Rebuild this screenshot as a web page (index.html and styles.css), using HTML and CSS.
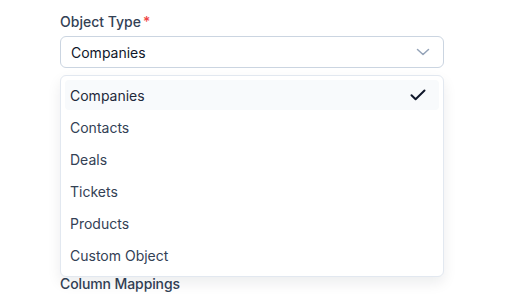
FILE: index.html
```html
<!DOCTYPE html>
<html lang="en">
<head>
    <meta charset="UTF-8">
    <meta name="viewport" content="width=device-width, initial-scale=1.0">
    <title>Object Type</title>
    <link rel="stylesheet" href="styles.css">
</head>
<body>
    <div class="form">
        <div class="field">
            <label class="field-label">Object Type<span class="required">*</span></label>
            <div class="select-wrap">
                <div class="select">
                    <span>Companies</span>
                    <svg class="chevron" width="14" height="8" viewBox="0 0 14 8" fill="none">
                        <path d="M1.5 1.5L7 6.5L12.5 1.5" stroke="#94a3b8" stroke-width="1.5" stroke-linecap="round" stroke-linejoin="round"/>
                    </svg>
                </div>
                <ul class="dropdown">
                    <li class="option selected">
                        <span>Companies</span>
                        <svg width="16" height="12" viewBox="0 0 16 12" fill="none">
                            <path d="M1.5 6.2L5.6 10.2L14.5 1.5" stroke="#0f172a" stroke-width="2" stroke-linecap="round" stroke-linejoin="round"/>
                        </svg>
                    </li>
                    <li class="option">Contacts</li>
                    <li class="option">Deals</li>
                    <li class="option">Tickets</li>
                    <li class="option">Products</li>
                    <li class="option">Custom Object</li>
                </ul>
            </div>
        </div>

        <div class="section">
            <h3 class="section-title">Column Mappings</h3>
        </div>
    </div>
</body>
</html>
```

FILE: styles.css
```css
body {
    margin: 0;
    background: #ffffff;
    font-family: Inter, "Noto Sans", sans-serif;
    font-size: 14px;
    color: #334155;
}

.form {
    width: 384px;
    padding: 12px 0 0 60px;
}

.field-label {
    display: block;
    line-height: 20px;
    font-weight: 500;
    color: #334155;
    margin-bottom: 4px;
}

.required {
    color: #ef4444;
    margin-left: 2px;
}

.select-wrap {
    position: relative;
}

.select {
    height: 32px;
    box-sizing: border-box;
    border: 1px solid #cbd5e1;
    border-radius: 6px;
    padding: 0 13px 0 10px;
    display: flex;
    align-items: center;
    justify-content: space-between;
    color: #0f172a;
}

.dropdown {
    position: absolute;
    top: 39px;
    left: 0;
    right: 0;
    margin: 0;
    padding: 4px 4px 6px;
    list-style: none;
    background: #ffffff;
    border: 1px solid #e2e8f0;
    border-radius: 6px;
    box-shadow: 0 6px 14px rgba(15, 23, 42, 0.08);
    display: flex;
    flex-direction: column;
    gap: 2px;
}

.option {
    height: 30px;
    padding: 0 13px 0 5px;
    border-radius: 4px;
    display: flex;
    align-items: center;
    justify-content: space-between;
    color: #334155;
}

.option.selected {
    background: #f8fafc;
    color: #1e293b;
}

.section {
    margin-top: 206px;
}

.section-title {
    margin: 0;
    font-size: 14px;
    line-height: 20px;
    font-weight: 500;
    letter-spacing: -0.1px;
    color: #334155;
}
```
